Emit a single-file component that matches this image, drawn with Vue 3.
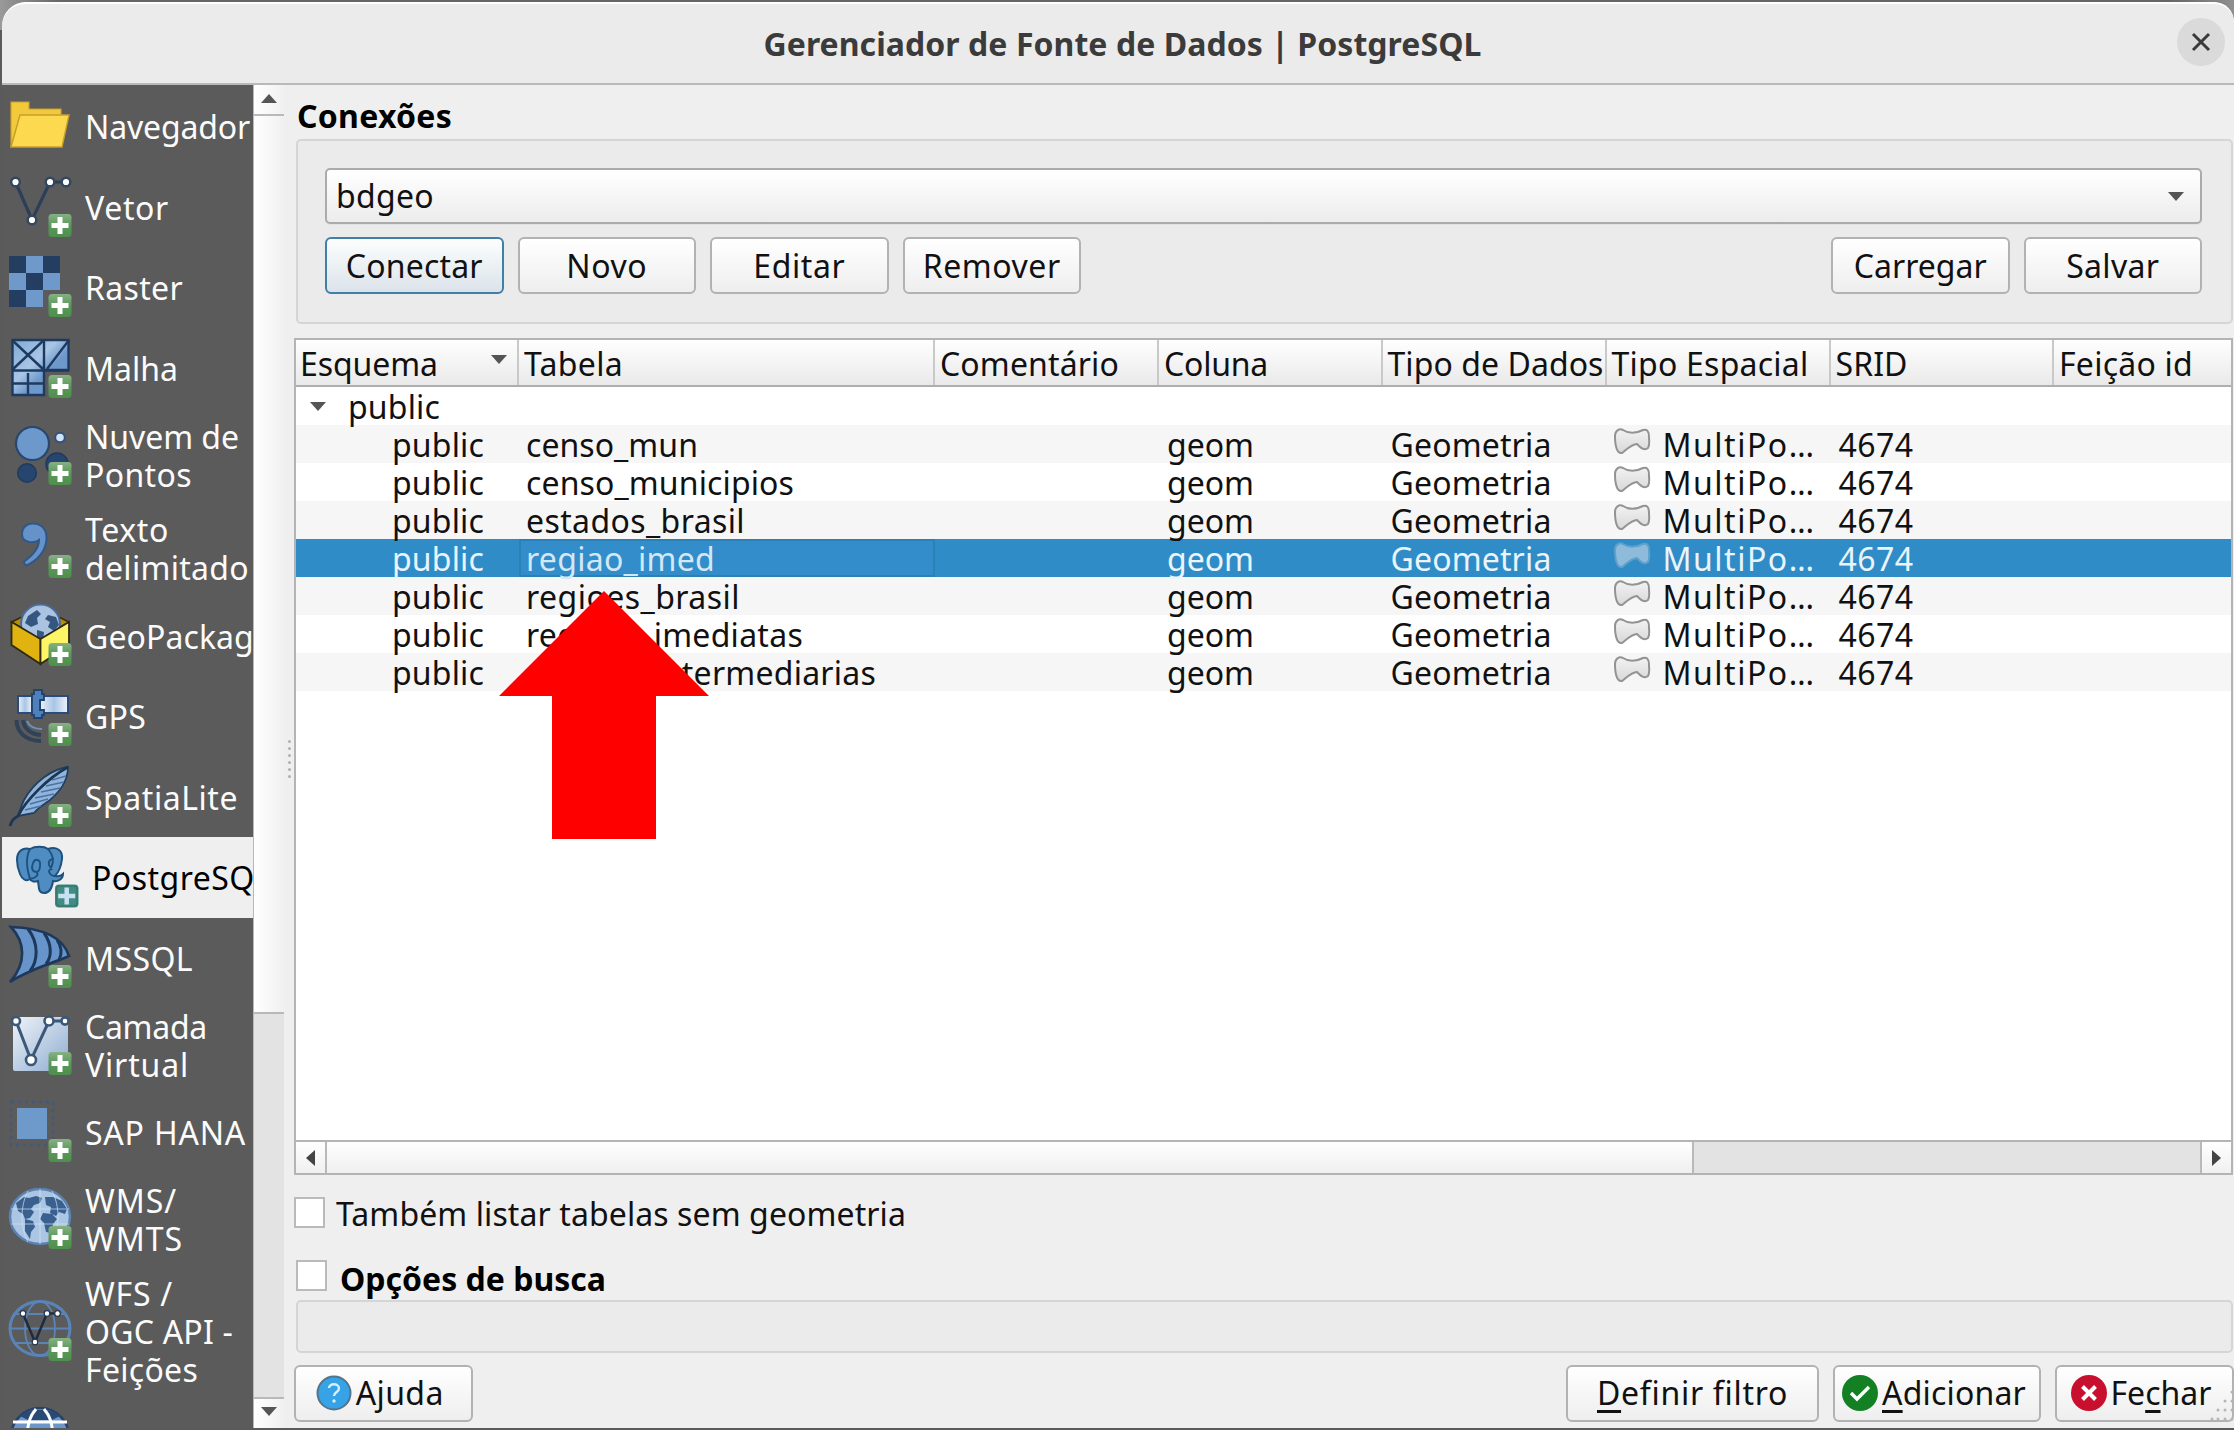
<script setup>
import { ref } from 'vue'

const bearings = 2
const vFit = {
  mounted(el, { value }) {
    if (!value) return
    const n = [...el.textContent].length
    el.style.letterSpacing = (value - bearings - el.getBoundingClientRect().width) / n + 'px'
  },
}

const plus =
  '<rect x="40.5" y="38" width="23" height="23" rx="3.5" fill="url(#plusFill)"/><path d="M52 41v17M43.500 49.500h17" stroke="#fff" stroke-width="5"/>'

const continents =
  '<path d="M8 15l8-6 5 1 7-2 6 2-2 5-6 2-3 4 3 3-4 6-5 1-2-5-5-3zM37 9l8 0 9 4 5 8-2 5-6-2-3 4-6-3 1-6-5-2zM17 31l8 2 2 6-4 5-1 7-5-8zM35 25l9 1 5 5-4 5-2 9-5-1-2-9-4-4z" fill="#39608f"/>'

const icons = {
  folder:
    '<path d="M3 52V7H21V14H53V22L11 24Z" fill="#f3c93c" stroke="#c9a02c" stroke-width="1.2"/><path d="M3 52L12 20H61L54 52Z" fill="#fcd94f" stroke="#c79f2c" stroke-width="1.4"/>',
  vector:
    '<path d="M7.500 6L24 44L42 6H58" fill="none" stroke="#2b3f58" stroke-width="3.2"/><g fill="#fff" stroke="#33475f" stroke-width="2.4"><circle cx="7.500" cy="6" r="4.300"/><circle cx="24" cy="44" r="4.300"/><circle cx="42" cy="6" r="4.300"/><circle cx="58" cy="6" r="4.300"/></g>' + plus,
  raster:
    '<path d="M1 0H52V34H35V51H1Z" fill="#6f99ca"/><path d="M1 0h17v17H1zM35 0h17v17H35zM18 17h17v17H18zM1 34h17v17H1z" fill="#243e61"/>' + plus,
  mesh:
    '<path d="M4.500 3H60.500V33H36V58H4.500Z" fill="url(#blueDiag)" stroke="#1f3a5f" stroke-width="2.400"/><path d="M4 3L36 33M36 3L4 33M36 2V34M61 3L39 32M4 33.500H61M4 46.500H36M20 36V58" stroke="#1f3a5f" stroke-width="2.400" fill="none"/>' + plus,
  cloud:
    '<circle cx="24.500" cy="19.500" r="16.500" fill="#6c98cb" stroke="#29466f" stroke-width="2.200"/><circle cx="52" cy="13.500" r="4.800" fill="#cfe2f6" stroke="#33507a" stroke-width="2"/><circle cx="49" cy="40" r="11" fill="#27466f" stroke="#1f3a5f" stroke-width="1.500"/><circle cx="19" cy="49" r="9.300" fill="#27466f" stroke="#1f3a5f" stroke-width="1.500"/>' + plus,
  comma:
    '<path d="M14 17C14 10 19 6.500 25 6.500C34 6.500 39 13 38.500 22C38 34 29 44 18 48.500L15.500 45C24 39 31 32 31 23C27 26 14 27 14 17Z" fill="#6592c8" stroke="#2f5788" stroke-width="2"/>' + plus,
  geopackage:
    '<path d="M3.500 17L32.500 3L61 17L32.500 34Z" fill="#b98c06" stroke="#2f2a10" stroke-width="1.500"/><circle cx="32.500" cy="19" r="19.500" fill="#a9c3e0" stroke="#4a6c97" stroke-width="2"/><path d="M20 11l9-6 4 4-4 4 1 6-7 3-6-4zM40 10l8 2 3 8-5 6-6-4 2-5-5-3zM29 25l7 2-1 9-6-4z" fill="#35577f"/><path d="M3.500 17L32.500 34V59L3.500 40Z" fill="#e0b310" stroke="#2f2a10" stroke-width="1.800"/><path d="M61 17L32.500 34V59L61 40Z" fill="#fdf566" stroke="#2f2a10" stroke-width="1.800"/>' + plus,
  gps:
    '<path d="M8.500 35C8.500 47 18 56 33 56M15 35C16 43 22 49 33 50" fill="none" stroke="#2f4258" stroke-width="4"/><path d="M19 36C21 41 26 44 34 44" fill="none" stroke="#6f91ba" stroke-width="2"/><rect x="10" y="11" width="14" height="17" fill="url(#panel)" stroke="#2a4c7c" stroke-width="2"/><rect x="32" y="11" width="28" height="17" fill="url(#panel)" stroke="#2a4c7c" stroke-width="2"/><path d="M24 9h2V5h8v4h2v6h-4v10h4v5h-2v3h-8v-3h-2z" fill="#4e80bd" stroke="#23426c" stroke-width="1.800"/>' + plus,
  feather:
    '<path d="M60 1C44 3 26 16 16 34C13 40 12 45 10 50L26 47C30 42 38 37 42 34C51 26 60 16 60 1Z" fill="#90b4dc" stroke="#23405f" stroke-width="1.800"/><path d="M22 38L40 33M27 32L46 28M33 26L52 22M38 20L56 16M44 14L58 10M17 44L33 40" stroke="#4a72a3" stroke-width="1.400"/><path d="M60 1C40 12 18 34 10 50C6 52 3 56 2 60" fill="none" stroke="#1c3654" stroke-width="2.800"/>' + plus,
  elephant:
    '<path d="M2 14C2 5 8 1 15 3C20 0 29 0 33 3C41 0 48 4 47 13C46 21 43 27 40 30C44 31 47 29 48 28C48 33 43 36 38 35C37 42 35 47 29 47C23 47 24 41 23 35C20 36 16 36 15 33C11 36 7 33 5 28C3 23 2 19 2 14Z" fill="#4f8cc2" stroke="#1f517f" stroke-width="2"/><path d="M15 3C11 10 11 20 15 33C20 32 24 30 22 26C17 26 16 22 18 17C20 12 26 13 25 20C25 24 24 25 22 26M33 3C39 10 39 18 34 25C34 28 37 30 40 30M39 13C35 13 33 15 34 19L37 24" fill="none" stroke="#1f517f" stroke-width="1.900"/><rect x="40" y="38.500" width="23.500" height="23" rx="4" fill="#408c83"/><rect x="41.500" y="40" width="20.500" height="20" rx="3" fill="none" stroke="#36776f" stroke-width="1.500"/><path d="M51.700 41.500v17M43.200 50h17" stroke="#c7e1f1" stroke-width="4.500"/>',
  sail:
    '<path d="M3 0C17 15 19 36 2 55C22 42 43 37 61 29C55 10 35 1 3 0Z" fill="#6694cb" stroke="#1e3859" stroke-width="2.600"/><path d="M20 2C31 16 30 34 22 44M36 6C44 17 44 30 38 37M49 13C54 20 54 27 51 33" fill="none" stroke="#1e3859" stroke-width="3"/>' + plus,
  virtual:
    '<rect x="5" y="3" width="55" height="54" rx="2" fill="url(#paleDiag)"/><path d="M8 7L23 46L41 7H57" fill="none" stroke="#3c5879" stroke-width="3"/><g fill="#fff" stroke="#3c5879" stroke-width="2.600"><circle cx="8" cy="7" r="4"/><circle cx="23" cy="46" r="5"/><circle cx="41" cy="7" r="4.500"/><circle cx="57" cy="7" r="3.600"/></g>' + plus,
  hana:
    '<rect x="9" y="7" width="30" height="31" fill="#6e9acb"/><rect x="3" y="1" width="42" height="43" fill="none" stroke="#44587a" stroke-width="2.500" stroke-dasharray="3 4"/>' + plus,
  globe:
    '<ellipse cx="32" cy="28.500" rx="30" ry="27.500" fill="#abc6e4" stroke="#5b82b0" stroke-width="2.500"/>' + continents + '<path d="M20 3C12 18 12 40 20 54M44 3C52 18 52 40 44 54M32 1V56M3 21H61M3 36H61" fill="none" stroke="#d3e2f2" stroke-width="1" opacity=".7"/>' + plus,
  wfs:
    '<g fill="none" stroke="#5a84b8" stroke-width="1.800"><ellipse cx="32" cy="28.500" rx="30" ry="27" stroke-width="3"/><ellipse cx="32" cy="28.500" rx="15" ry="27"/><path d="M2 28.500H62M7 14H57M7 43H57"/></g><path d="M15 13.500L27 42L39 13.500H49.500" fill="none" stroke="#1f2b3c" stroke-width="2.500"/><g fill="#fff" stroke="#26384f" stroke-width="1.200"><circle cx="15" cy="13.500" r="2.800"/><circle cx="27" cy="42" r="2.800"/><circle cx="39" cy="13.500" r="2.800"/><circle cx="49.500" cy="13.500" r="2.800"/></g>' + plus,
  wcs:
    '<circle cx="32" cy="31" r="29" fill="#6b97cb" stroke="#27436a" stroke-width="2.500"/><path d="M12 10C20 2 44 2 52 10L44 14H20Z" fill="#2a4a76"/><path d="M28 3C22 10 20 16 19 30M36 3C42 10 44 16 45 30M5 16H59" fill="none" stroke="#fff" stroke-width="3"/>',
}

const items = [
  { icon: 'folder', lines: [['Navegador', 167]] },
  { icon: 'vector', lines: [['Vetor', 86]] },
  { icon: 'raster', lines: [['Raster', 100]] },
  { icon: 'mesh', lines: [['Malha', 95]] },
  { icon: 'cloud', lines: [['Nuvem de', 156], ['Pontos', 109]] },
  { icon: 'comma', lines: [['Texto', 86], ['delimitado', 166]] },
  { icon: 'geopackage', lines: [['GeoPackage', 189]] },
  { icon: 'gps', lines: [['GPS', 63]] },
  { icon: 'feather', lines: [['SpatiaLite', 155]] },
  { icon: 'elephant', lines: [['PostgreSQL', 182]] },
  { icon: 'sail', lines: [['MSSQL', 110]] },
  { icon: 'virtual', lines: [['Camada', 124], ['Virtual', 106]] },
  { icon: 'hana', lines: [['SAP HANA', 163]] },
  { icon: 'globe', lines: [['WMS/', 94], ['WMTS', 100]] },
  { icon: 'wfs', lines: [['WFS /', 90], ['OGC API -', 150], ['Feições', 115]] },
  { icon: 'wcs', lines: [] },
]
const active = ref('elephant')

const columns = [
  ['Esquema', 140], ['Tabela', 101], ['Comentário', 181], ['Coluna', 106],
  ['Tipo de Dados', 218], ['Tipo Espacial', 199], ['SRID', 74], ['Feição id', 136],
]
const rows = [
  ['censo_mun', 174], ['censo_municipios', 270], ['estados_brasil', 221], ['regiao_imed', 191],
  ['regioes_brasil', 216], ['regioes_imediatas', 279], ['regioes_intermediarias', 352],
]
const selected = ref(3)
</script>

<template>
  <div class="screen">
    <svg class="defs" width="0" height="0">
      <defs>
        <linearGradient id="plusFill" x1="0" y1="0" x2="0" y2="1"><stop offset="0" stop-color="#86b184" /><stop offset=".5" stop-color="#5b985a" /><stop offset="1" stop-color="#4e8f4c" /></linearGradient>
        <linearGradient id="blueDiag" x1="0" y1="0" x2="1" y2="1"><stop offset="0" stop-color="#7fa8d6" /><stop offset=".4" stop-color="#a9c6e6" /><stop offset=".6" stop-color="#6c98cb" /><stop offset="1" stop-color="#6c98cb" /></linearGradient>
        <linearGradient id="paleDiag" x1="0" y1="0" x2="1" y2="1"><stop offset="0" stop-color="#eef3f9" /><stop offset="1" stop-color="#8fadd0" /></linearGradient>
        <linearGradient id="panel"><stop offset="0" stop-color="#e9f1fa" /><stop offset=".5" stop-color="#a9c5e4" /><stop offset="1" stop-color="#eef4fb" /></linearGradient>
        <linearGradient id="poly" x1="0" y1="0" x2="0" y2="1"><stop offset="0" stop-color="#f2f2f2" /><stop offset="1" stop-color="#d8d8d8" /></linearGradient>
      </defs>
    </svg>

    <div class="window">
      <header class="titlebar">
        <b v-fit="720">Gerenciador de Fonte de Dados | PostgreSQL</b>
        <button class="close"><svg width="22" height="22" viewBox="0 0 22 22"><path d="M3 3L19 19M19 3L3 19" stroke="#3a3a3a" stroke-width="3" /></svg></button>
      </header>

      <div class="body">
        <nav class="side">
          <div v-for="it in items" :key="it.icon" class="item" :class="{ active: it.icon === active, multi: it.lines.length > 1 }">
            <svg class="ico" width="64" height="64" viewBox="0 0 64 64" v-html="icons[it.icon]" />
            <div class="lines"><div v-for="l in it.lines" :key="l[0]"><span v-fit="l[1]">{{ l[0] }}</span></div></div>
          </div>
        </nav>
        <div class="vbar">
          <div class="vbtn top"><i class="tri up" /></div>
          <div class="vthumb" />
          <div class="vtrack" />
          <div class="vbtn bottom"><i class="tri down" /></div>
        </div>
        <div class="splitter"><i v-for="n in 6" :key="n" /></div>

        <main class="main">
          <div class="heading"><b v-fit="157">Conexões</b></div>
          <section class="group">
            <div class="combo"><span v-fit="100">bdgeo</span><i class="tri down" /></div>
            <div class="btns">
              <button class="btn focus"><span v-fit="139">Conectar</span></button>
              <button class="btn"><span v-fit="83">Novo</span></button>
              <button class="btn"><span v-fit="94">Editar</span></button>
              <button class="btn"><span v-fit="140">Remover</span></button>
              <div class="grow" />
              <button class="btn"><span v-fit="135">Carregar</span></button>
              <button class="btn"><span v-fit="95">Salvar</span></button>
            </div>
          </section>

          <section class="table">
            <div class="thead grid">
              <div v-for="(c, i) in columns" :key="c[0]" class="th"><span v-fit="c[1]">{{ c[0] }}</span><i v-if="i === 0" class="tri down" /></div>
            </div>
            <div class="tbody">
              <div class="row root"><i class="tri down" /><span v-fit="94">public</span></div>
              <div v-for="(r, i) in rows" :key="r[0]" class="row grid" :class="{ alt: i % 2 === 0, sel: i === selected }">
                <div class="td child"><span v-fit="94">public</span></div>
                <div class="td name"><span v-fit="r[1]">{{ r[0] }}</span></div>
                <div class="td" />
                <div class="td"><span v-fit="89">geom</span></div>
                <div class="td"><span v-fit="163">Geometria</span></div>
                <div class="td geo">
                  <svg width="38" height="28" viewBox="0 0 38 28"><path d="M2 8C2 3 6 0 10 2C16 6 24 5 30 2C34 1 36 3 36 9C36 13 37 17 35 20C31 23 28 20 24 16C19 16 14 21 9 25C4 26 2 18 2 8Z" :fill="i === selected ? '#8fbbdb' : 'url(#poly)'" :stroke="i === selected ? '#5fa0cd' : '#939393'" stroke-width="2" /></svg>
                  <span v-fit="155">MultiPo…</span>
                </div>
                <div class="td"><span v-fit="77">4674</span></div>
                <div class="td" />
              </div>
            </div>
            <div class="hbar">
              <div class="hbtn"><i class="tri left" /></div>
              <div class="hthumb" />
              <div class="htrack" />
              <div class="hbtn end"><i class="tri right" /></div>
            </div>
            <svg class="arrow" width="210" height="248" viewBox="0 0 210 248"><path d="M105 0L210 105H157V248H53V105H0Z" fill="#fe0000" /></svg>
          </section>

          <label class="check"><i class="box" /><span v-fit="572">Também listar tabelas sem geometria</span></label>
          <label class="check second"><i class="box" /><b v-fit="268">Opções de busca</b></label>
          <section class="group empty" />

          <footer class="foot">
            <button class="btn help">
              <svg width="36" height="36" viewBox="0 0 36 36"><circle cx="18" cy="18" r="16.500" fill="#36a3e6" stroke="#54748c" stroke-width="2" /><path d="M13 13C13 8 23 8 23 13.500C23 17 18 17 18 21" fill="none" stroke="#d8effc" stroke-width="2.400" /><circle cx="18" cy="26" r="1.700" fill="#d8effc" /></svg>
              <span v-fit="90">Ajuda</span>
            </button>
            <div class="grow" />
            <button class="btn filter"><span v-fit="193"><u>D</u>efinir filtro</span></button>
            <button class="btn add">
              <svg width="36" height="36" viewBox="0 0 36 36"><circle cx="18" cy="18" r="18" fill="#138023" /><path d="M9 18L15 24L27 12" fill="none" stroke="#fff" stroke-width="3.400" /></svg>
              <span v-fit="146"><u>A</u>dicionar</span>
            </button>
            <button class="btn shut">
              <svg width="36" height="36" viewBox="0 0 36 36"><circle cx="18" cy="18" r="18" fill="#c8102e" /><path d="M11.500 11.500L24.500 24.500M24.500 11.500L11.500 24.500" stroke="#fff" stroke-width="4" /></svg>
              <span v-fit="103">Fe<u>c</u>har</span>
            </button>
            <svg class="grip" width="24" height="32" viewBox="0 0 24 32"><g fill="#b5b5b5"><circle v-for="(p, i) in [[22,2],[22,11],[15,11],[22,20],[15,20],[8,20],[22,29],[15,29],[8,29],[2,29]]" :key="i" :cx="p[0]" :cy="p[1]" r="1.500" /></g></svg>
          </footer>
        </main>
      </div>
    </div>
  </div>
</template>

<style>
body { background: #666; overflow: hidden; }
</style>

<style scoped>
* { box-sizing: border-box; }
.screen { width: 2234px; height: 1430px; padding: 2px 0 2px 2px; background: linear-gradient(90deg, #9a9a9a 0, #666 60px, #666 2170px, #8f8f8f 2234px) top / 100% 30px no-repeat, #5a5a5a; overflow: hidden; font: 32px/38px "Noto Sans", "Open Sans", sans-serif; color: #111; }
.defs { position: absolute; }
.window { height: 1426px; display: flex; flex-direction: column; background: #efefef; border-radius: 24px 20px 0 0; overflow: hidden; }
span, b { display: inline-block; white-space: nowrap; flex: none; }
b { font-weight: 700; color: #000; }
.titlebar { position: relative; height: 83px; flex: none; display: flex; justify-content: center; align-items: center; padding-left: 9px; background: #ebebeb; border-top: 2px solid #fff; border-bottom: 2px solid #b9b9b9; border-radius: 24px 20px 0 0; }
.titlebar b { color: #3b3b3b; }
.close { position: absolute; right: 9px; top: 14px; width: 48px; height: 48px; border: 0; border-radius: 50%; background: #dadada; display: flex; align-items: center; justify-content: center; padding: 0; }
.body { flex: 1; display: flex; min-height: 0; }
.side { width: 251px; flex: none; background: #5b5b5b; overflow: hidden; padding-top: 2px; }
.item { height: 80.500px; display: flex; align-items: center; padding-left: 6px; color: #fbfbfb; }
.item.multi { height: auto; padding-block: 8.700px 9px; }
.item:nth-child(15) { padding-bottom: 8px; }
.item.active { background: #efefef; color: #000; padding: 1px 0 0 13px; height: 81.500px; margin-top: -1px; }
.ico { flex: none; margin-right: 13px; overflow: visible; }
.vbar { width: 31px; flex: none; display: flex; flex-direction: column; border-left: 1px solid #b9b9b9; }
.vbtn { height: 31px; flex: none; background: linear-gradient(90deg, #fff, #f0f0f0); display: flex; align-items: center; justify-content: center; }
.vbtn.top { border-bottom: 2px solid #b9b9b9; }
.vbtn.bottom { border-top: 2px solid #b9b9b9; }
.vbtn.top .tri { margin-top: -2px; }
.vbtn.bottom .tri { margin-top: -4px; }
.vthumb { height: 898px; flex: none; background: linear-gradient(90deg, #fff, #f0f0f0); border-bottom: 2px solid #b9b9b9; }
.vtrack { flex: 1; background: #e3e3e3; }
.tri { width: 0; height: 0; flex: none; border: 8px solid transparent; }
.tri.down { border-top: 9px solid #555; border-bottom: 0; }
.tri.up { border-bottom: 9px solid #555; border-top: 0; }
.tri.left { border-right: 9px solid #444; border-left: 0; }
.tri.right { border-left: 9px solid #444; border-right: 0; }
.splitter { width: 10px; flex: none; display: flex; flex-direction: column; align-items: center; gap: 4px; padding-top: 655px; }
.splitter i { width: 3px; height: 3px; flex: none; border-radius: 50%; background: #b0b0b0; }
.main { flex: 1; min-width: 0; display: flex; flex-direction: column; padding-right: 1px; }
.heading { height: 54px; padding: 12px 0 0 3px; flex: none; }
.group { height: 185px; flex: none; margin-left: 2px; padding: 27px 29px 0 27px; background: #ebebeb; border: 2px solid #d5d5d5; border-radius: 5px; }
.group.empty { height: 53px; padding: 0; margin-top: 2px; }
.combo { height: 56px; display: flex; align-items: center; justify-content: space-between; padding: 0 16px 0 9px; border: 2px solid #ababab; border-radius: 5px; background: linear-gradient(#fff, #ececec); box-shadow: 0 1px #e2e2e2; }
.btns { display: flex; gap: 14px; margin-top: 13px; }
.btn { height: 57px; width: 178.500px; flex: none; padding: 0; border: 2px solid #b2b2b2; border-radius: 6px; background: linear-gradient(#fff, #eee); font: inherit; color: inherit; display: flex; align-items: center; justify-content: center; }
.btn.focus { border-color: #3f7fa8; background: linear-gradient(#fdfefe, #dbe3ea); }
.grow { flex: 1; }
.table { position: relative; height: 837px; flex: none; margin-top: 14px; border: 2px solid #b4b4b4; background: #fff; display: flex; flex-direction: column; }
.grid { display: grid; grid-template-columns: 223px 416px 224px 223.500px 224px 224px 223.500px 1fr; grid-template-rows: 100%; }
.thead { height: 47px; flex: none; background: linear-gradient(#fff, #e9e9e9); border-bottom: 2px solid #aeaeae; }
.th { display: flex; align-items: center; justify-content: space-between; padding: 2px 10px 0 5px; border-right: 2px solid #c9c9c9; min-width: 0; }
.th:first-child { padding-left: 4px; }
.th:last-child { border: 0; }
.th .tri { margin-top: -8px; }
.tbody { flex: 1; }
.row { height: 38.050px; }
.root { display: flex; align-items: center; padding: 1px 0 0 14px; gap: 22px; }
.td { display: flex; align-items: center; padding: 1px 0 0 8px; min-width: 0; }
.td.child { padding-left: 96px; }
.td.name { padding-left: 7px; }
.alt { background: #f6f6f6; }
.sel { background: #308cc6; color: #eaf4fb; }
.sel .name { box-shadow: inset 0 0 0 2px #2b80b6; background: #328dca; color: #d3e7f5; }
.geo svg { margin: -6px 12px 0 -2px; flex: none; }
.hbar { height: 33px; flex: none; display: flex; border-top: 2px solid #b4b4b4; }
.hbtn { width: 31px; display: flex; align-items: center; justify-content: center; background: linear-gradient(#fff, #f0f0f0); border-right: 2px solid #b9b9b9; }
.hbtn.end { border-right: 0; border-left: 2px solid #b9b9b9; }
.hthumb { width: 1367px; background: linear-gradient(#fff, #efefef); border-right: 2px solid #b9b9b9; }
.htrack { flex: 1; background: #e3e3e3; }
.arrow { position: absolute; left: 202.500px; top: 251px; }
.check { display: flex; align-items: center; gap: 11px; height: 38px; margin-top: 20px; flex: none; }
.check.second { margin: 27px 0 0 2px; gap: 13px; }
.box { width: 31px; height: 31px; border: 2px solid #bababa; background: #fff; margin-top: -3px; flex: none; }
.second .box { margin-top: -7px; }
.foot { position: relative; display: flex; gap: 14px; margin-top: 12px; margin-right: -1px; }
.btn svg { flex: none; margin-right: 4px; }
.btn.help { padding-right: 7px; }
.btn.filter { width: 253px; }
.btn.add { width: 208px; padding-right: 6px; }
.btn.shut { width: 179px; padding-right: 7px; }
.foot .btn { padding-bottom: 1px; }
u { text-decoration-thickness: 3px; text-underline-offset: 5px; text-decoration-skip-ink: none; }
.grip { position: absolute; right: 0; bottom: 0; }
</style>
